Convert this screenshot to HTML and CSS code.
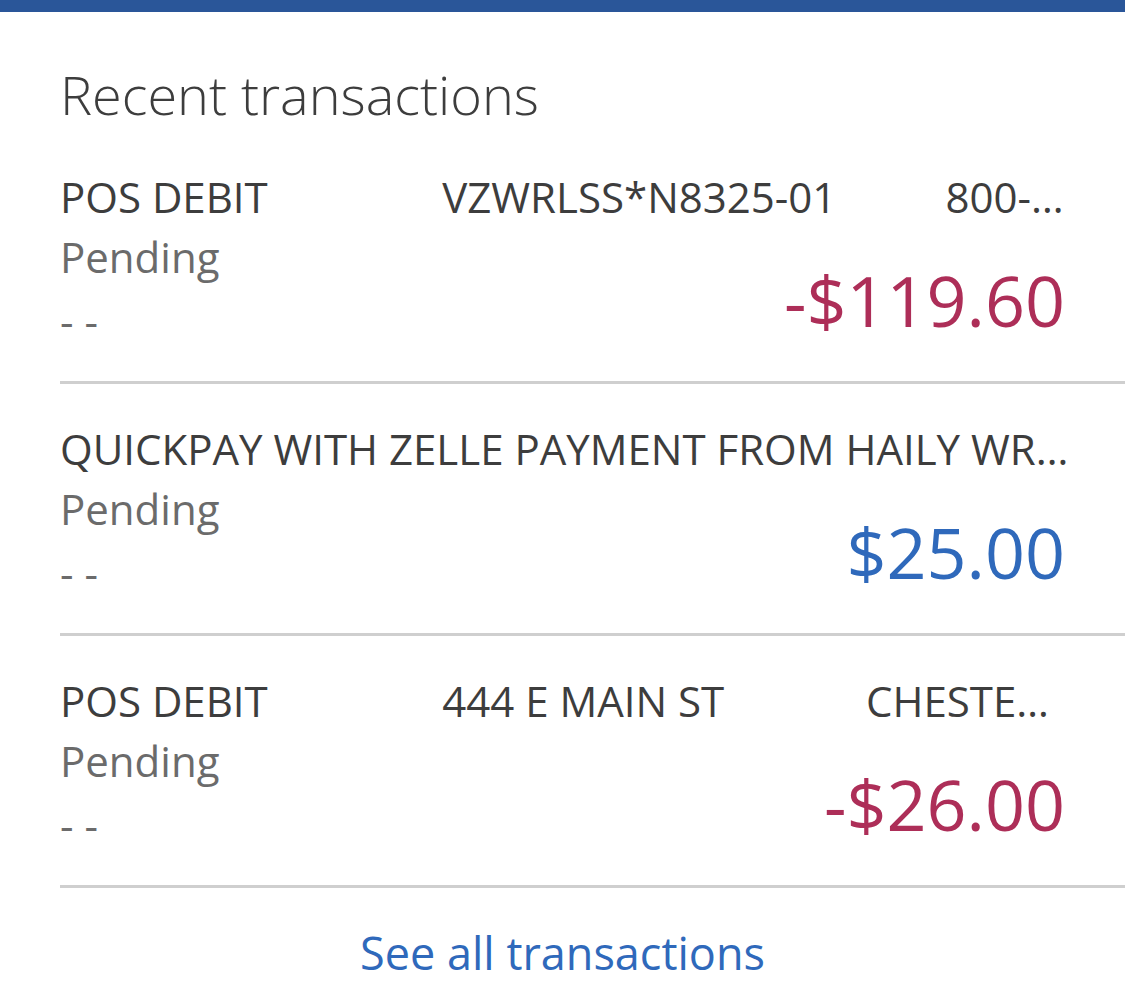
FILE: index.html
```html
<!DOCTYPE html>
<html lang="en">
<head>
<meta charset="utf-8">
<title>Recent transactions</title>
<link rel="stylesheet" href="styles.css">
</head>
<body>
<div class="topbar"></div>
<section class="card">
  <h2 class="title">Recent transactions</h2>
  <ul class="list">
    <li class="row">
      <div class="desc">POS DEBIT                VZWRLSS*N8325-01          800-922-0204 NJ</div>
      <div class="bottom">
        <div class="meta">
          <div class="status">Pending</div>
          <div class="date">- -</div>
        </div>
        <div class="amount negative">-$119.60</div>
      </div>
    </li>
    <li class="row">
      <div class="desc">QUICKPAY WITH ZELLE PAYMENT FROM HAILY WRIGHT 1234567890</div>
      <div class="bottom">
        <div class="meta">
          <div class="status">Pending</div>
          <div class="date">- -</div>
        </div>
        <div class="amount positive">$25.00</div>
      </div>
    </li>
    <li class="row">
      <div class="desc">POS DEBIT                444 E MAIN ST             CHESTERTOWN MD</div>
      <div class="bottom">
        <div class="meta">
          <div class="status">Pending</div>
          <div class="date">- -</div>
        </div>
        <div class="amount negative">-$26.00</div>
      </div>
    </li>
  </ul>
  <div class="footer">
    <a class="see-all" href="#">See all transactions</a>
  </div>
</section>
</body>
</html>
```
FILE: styles.css
```css
html, body {
  margin: 0;
  padding: 0;
  background: #ffffff;
}

body {
  font-family: "Open Sans", "Noto Sans", sans-serif;
  color: #3d3d3d;
}

.topbar {
  height: 12px;
  background: #2a5699;
}

.card {
  padding: 0;
}

.title {
  margin: 46px 60px 2px 60px;
  font-size: 54px;
  font-weight: 300;
  line-height: 72px;
  color: #3d3d3d;
}

.list {
  list-style: none;
  margin: 0 0 0 60px;
  padding: 0;
}

.row {
  padding: 37px 54px 32px 0;
  border-bottom: 3px solid #cfcfcf;
}

.desc {
  font-size: 42px;
  line-height: 56px;
  white-space: pre;
  overflow: hidden;
  text-overflow: ellipsis;
  color: #3d3d3d;
}

.bottom {
  display: flex;
  justify-content: space-between;
  align-items: flex-end;
}

.status {
  margin-top: 4px;
  font-size: 42px;
  line-height: 56px;
  color: #6b6b6b;
}

.date {
  margin-top: 8px;
  font-size: 42px;
  line-height: 56px;
  color: #6b6b6b;
}

.amount {
  margin-bottom: 9px;
  margin-right: 6px;
  font-size: 70px;
  line-height: 80px;
}

.negative {
  color: #ad2e58;
}

.positive {
  color: #2f69bb;
}

.footer {
  display: flex;
  justify-content: center;
  padding-top: 35px;
}

.see-all {
  font-size: 45px;
  line-height: 60px;
  color: #2f69bb;
  text-decoration: none;
}
```
